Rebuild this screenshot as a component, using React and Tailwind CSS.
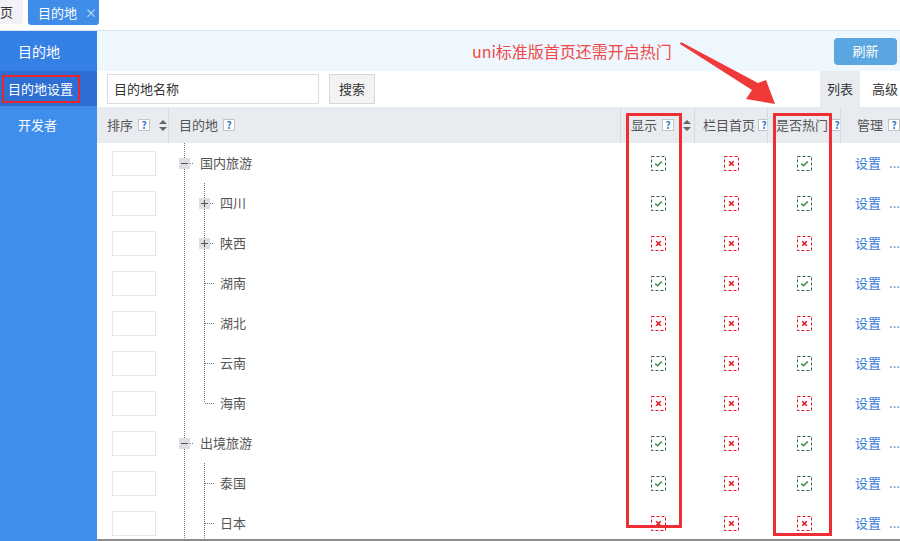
import React from 'react';

const rows = [
  { name: '国内旅游', level: 0, icon: 'minus', show: true, home: false, hot: true },
  { name: '四川', level: 1, icon: 'plus', show: true, home: false, hot: true },
  { name: '陕西', level: 1, icon: 'plus', show: false, home: false, hot: false },
  { name: '湖南', level: 1, show: true, home: false, hot: true },
  { name: '湖北', level: 1, show: false, home: false, hot: false },
  { name: '云南', level: 1, show: true, home: false, hot: true },
  { name: '海南', level: 1, last: true, show: false, home: false, hot: false },
  { name: '出境旅游', level: 0, icon: 'minus', show: true, home: false, hot: true },
  { name: '泰国', level: 1, show: true, home: false, hot: true },
  { name: '日本', level: 1, show: false, home: false, hot: false },
];

function Help({ tight }) {
  return (
    <span
      className={
        'inline-flex items-center justify-center w-[12px] h-[12px] border border-[#c4c4c4] bg-white text-[10px] leading-none font-bold text-[#2a78d6] shrink-0 ' +
        (tight ? 'ml-[3px]' : 'ml-[5px]')
      }
    >
      ?
    </span>
  );
}

function SortIcon() {
  return (
    <svg width="8" height="11" viewBox="0 0 8 11" className="ml-[9px] shrink-0">
      <path d="M4 0 L8 4 L0 4 Z" fill="#666" />
      <path d="M4 11 L8 7 L0 7 Z" fill="#666" />
    </svg>
  );
}

function Check({ ok }) {
  const c = ok ? '#2b6a3b' : '#e3141c';
  return (
    <svg width="15" height="15" viewBox="0 0 15 15">
      <rect x="0.5" y="0.5" width="14" height="14" fill="none" stroke={c} strokeDasharray="3 2" />
      {ok ? (
        <path d="M4.3 7.6 L6.6 9.8 L10.8 5.4" fill="none" stroke="#3d8a4f" strokeWidth="1.5" />
      ) : (
        <path d="M5.2 5.2 L9.8 9.8 M9.8 5.2 L5.2 9.8" fill="none" stroke={c} strokeWidth="1.5" />
      )}
    </svg>
  );
}

function Tree({ row }) {
  const dot = { stroke: '#777', strokeDasharray: '1 1', strokeWidth: 1 };
  if (row.level === 0) {
    return (
      <svg width="30" height="40" className="shrink-0">
        <line x1="15.5" y1="0" x2="15.5" y2="40" {...dot} />
        <rect x="10" y="15" width="11" height="11" fill="#dcdee2" />
        <line x1="12" y1="20.5" x2="19" y2="20.5" stroke="#555" />
        <line x1="21" y1="20.5" x2="25" y2="20.5" {...dot} />
      </svg>
    );
  }
  return (
    <svg width="50" height="40" className="shrink-0">
      <line x1="15.5" y1="0" x2="15.5" y2="40" {...dot} />
      <line x1="35.5" y1="0" x2="35.5" y2={row.last ? 20 : 40} {...dot} />
      {row.icon === 'plus' ? (
        <>
          <rect x="30" y="15" width="11" height="11" fill="#dcdee2" />
          <line x1="32" y1="20.5" x2="39" y2="20.5" stroke="#555" />
          <line x1="35.5" y1="17" x2="35.5" y2="24" stroke="#555" />
          <line x1="41" y1="20.5" x2="45" y2="20.5" {...dot} />
        </>
      ) : (
        <line x1="36" y1="20.5" x2="45" y2="20.5" {...dot} />
      )}
    </svg>
  );
}

export default function App() {
  return (
    <div
      className="relative w-[900px] h-[541px] overflow-hidden bg-white flex flex-col text-[#555]"
      style={{ fontFamily: '"Microsoft YaHei", "Noto Sans CJK SC", sans-serif' }}
    >
      {/* tab bar */}
      <div className="h-[31px] shrink-0 flex items-start border-b border-[#dbe5f0] bg-white">
        <div className="h-[24px] w-[23px] bg-[#f1f1f7] rounded-br-[3px] flex items-center justify-end pr-[10px] text-[13px] text-[#333] whitespace-nowrap">页</div>
        <div className="ml-[5px] h-[25px] w-[71px] bg-[#3f8de9] rounded-b-[3px] flex items-center pl-[10px] text-[13px] text-white whitespace-nowrap">
          目的地
          <span className="ml-[8px] text-[12px] text-[#d8e8fb]">×</span>
        </div>
      </div>

      <div className="flex flex-1 min-h-0">
        {/* sidebar */}
        <div className="w-[97px] shrink-0 flex flex-col bg-[#3f8eec] text-white">
          <div className="h-[40px] bg-[#3580e4] flex items-center pl-[18px] text-[14px]">目的地</div>
          <div className="h-[35px] bg-[#2e6fd3] flex items-center">
            <div className="ml-[2px] w-[78px] h-[28px] border-2 border-[#e8262e] flex items-center pl-[4px] text-[13px] whitespace-nowrap">目的地设置</div>
          </div>
          <div className="h-[38px] flex items-center pl-[18px] text-[13px]">开发者</div>
        </div>

        {/* main */}
        <div className="flex-1 min-w-0 flex flex-col border-b-2 border-[#8c8c8c]">
          <div className="h-[40px] shrink-0 bg-[#eef6fe] flex items-center">
            <span className="ml-[375px] text-[16px] text-[#f04848]">uni标准版首页还需开启热门</span>
            <div className="ml-auto mr-[3px] w-[63px] h-[27px] rounded-[4px] bg-[#5aa6e1] flex items-center justify-center text-[13px] text-white">刷新</div>
          </div>

          <div className="h-[36px] shrink-0 flex items-center">
            <div className="ml-[10px] w-[212px] h-[30px] border border-[#dcdcdc] flex items-center pl-[6px] text-[13px] text-[#333]">目的地名称</div>
            <div className="ml-[10px] w-[46px] h-[30px] border border-[#d8d8d8] bg-[#f3f3f3] flex items-center justify-center text-[13px] text-[#333]">搜索</div>
            <div className="ml-auto flex h-full">
              <div className="w-[40px] bg-[#e8ebef] flex items-center justify-center text-[13px] text-[#333]">列表</div>
              <div className="w-[40px] flex items-center pl-[12px] text-[13px] text-[#333] whitespace-nowrap">高级</div>
            </div>
          </div>

          {/* table header */}
          <div className="h-[36px] shrink-0 bg-[#e8ebef] flex text-[13px] text-[#555]">
            <div className="w-[72px] shrink-0 flex items-center pl-[10px] border-r border-[#d6dadf]">
              排序<Help /><SortIcon />
            </div>
            <div className="w-[452px] shrink-0 flex items-center pl-[10px] border-r border-[#d6dadf]">
              目的地<Help />
            </div>
            <div className="w-[74px] shrink-0 flex items-center pl-[10px] border-r border-[#d6dadf]">
              显示<Help /><SortIcon />
            </div>
            <div className="w-[73px] shrink-0 flex items-center pl-[8px] border-r border-[#d6dadf] whitespace-nowrap overflow-hidden">
              栏目首页<Help tight />
            </div>
            <div className="w-[73px] shrink-0 flex items-center pl-[8px] border-r border-[#d6dadf] whitespace-nowrap overflow-hidden">
              是否热门<Help tight />
            </div>
            <div className="w-[70px] shrink-0 flex items-center pl-[16px] whitespace-nowrap">
              管理<Help />
            </div>
          </div>

          {/* rows */}
          <div className="flex flex-col">
            {rows.map((r) => (
              <div key={r.name} className="h-[40px] shrink-0 flex items-center text-[13px]">
                <div className="w-[72px] shrink-0 flex items-center pl-[15px]">
                  <div className="w-[44px] h-[25px] border border-[#e7e7e7]" />
                </div>
                <div className="w-[452px] shrink-0 flex items-center h-full">
                  <Tree row={r} />
                  <span className="ml-[1px] text-[#555]">{r.name}</span>
                </div>
                <div className="w-[74px] shrink-0 flex justify-center"><Check ok={r.show} /></div>
                <div className="w-[73px] shrink-0 flex justify-center"><Check ok={r.home} /></div>
                <div className="w-[73px] shrink-0 flex justify-center"><Check ok={r.hot} /></div>
                <div className="w-[70px] shrink-0 flex items-center pl-[14px] whitespace-nowrap">
                  <span className="text-[#3b7cd6]">设置</span>
                  <span className="ml-[8px] text-[#6d8fb8]">...</span>
                </div>
              </div>
            ))}
          </div>
        </div>
      </div>

      {/* annotation overlays */}
      <div className="absolute left-[626px] top-[113px] w-[56px] h-[415px] border-[3px] border-[#ee2d34]" />
      <div className="absolute left-[773px] top-[113px] w-[59px] h-[423px] border-[3px] border-[#ee2d34]" />
      <svg className="absolute left-0 top-0 pointer-events-none" width="900" height="541">
        <polygon
          points="680,44 681,42 758,83 766,80 775,104 746,99 752,90"
          fill="#f03a3a"
        />
      </svg>
    </div>
  );
}
